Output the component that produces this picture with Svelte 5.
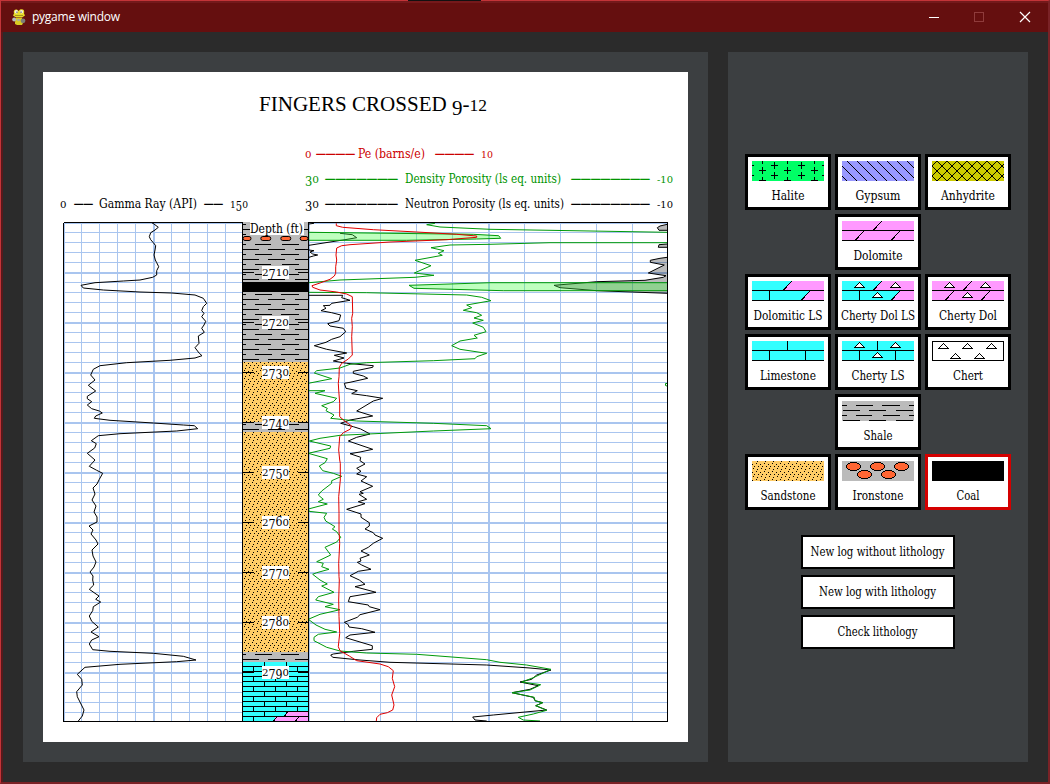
<script>
  // Curve samples are stored in thirds of a pixel, relative to each section's origin.
  function trace(sections) {
    return sections
      .map(([ox, oy, pts]) =>
        pts
          .split(' ')
          .map((p) => {
            const [x, y] = p.split(',').map(Number);
            return (ox + x / 3).toFixed(1) + ',' + (oy + y / 3).toFixed(1);
          })
          .join(' ')
      )
      .join(' ');
  }

  const gamma = trace([
    [50, 140, '305,248 312,252 325,262 315,270 302,278 298,290 302,299 310,308 317,317 315,330 312,345 316,360 320,368 326,380 320,392 320,405 308,412 270,420 220,423 135,428 93,436 100,444 160,450 270,456 365,459'],
    [60, 280, '405,45 430,55 440,70 430,80 425,92 432,100 425,110 437,124 432,135 425,145 433,157 415,168 417,190 405,203 418,220 426,227 405,234 330,241 200,248 120,257 100,268 92,285 105,300 85,316 107,333 82,349 82,356 95,365 82,375 95,386 118,393 127,399 107,408 103,415 150,421 280,429 370,435 403,437 413,446 350,453 180,461 115,467 94,482 109,491 104,504 82,520 105,540 88,559 110,571 128,580 118,598'],
    [0, 0, '291,1452 279,1464 285,1482 276,1500 288,1518 282,1536 291,1551 291,1566 267,1578 279,1590 273,1602 288,1620 294,1632 276,1650 279,1668 288,1686 282,1701 270,1716 279,1728'],
    [60, 580, '98,0 101,15 88,28 105,40 117,48 107,58 122,66 100,80 98,92 88,108 95,124 115,141 93,156 117,170 95,180 88,192 98,209 150,214 280,220 370,229 408,240 350,245 180,253 75,262 52,283 65,298 67,315 50,335 52,350 72,390 67,408 55,423']
  ]);

  const pe = trace([
    [290, 140, '139,250 139,257 158,262 250,269 380,276 500,283 560,288 560,292 470,299 300,306 180,314 155,317 140,324 138,345 140,360 137,380 137,400 133,408 120,418 90,429 66,437 68,442 90,450'],
    [300, 280, '110,36 140,42 157,50 158,100 155,115 157,140 155,170 157,225 145,237 125,250 118,262 117,290 115,310 116,330 119,370 119,410 135,424 155,438 150,448 130,458'],
    [300, 430, '119,20 116,60 119,90 121,100 121,150 116,200 117,250 117,300 119,340 116,400 117,440'],
    [300, 580, '118,0 116,60 117,110 119,160 115,200 120,212 148,228 170,242 240,252 265,260 280,272 277,295 284,320 275,345 282,375 278,390 262,398 240,403 230,413 229,423']
  ]);

  const neutron = [
    trace([[290, 140, '57,252 72,250']]),
    trace([[290, 140, '150,280 187,284 200,293 165,299 57,316']]),
    trace([[290, 140, '57,330 72,332 60,336 68,342 83,345 70,348 57,352']]),
    trace([
      [300, 280, '25,46 128,46 125,53 150,61 95,70 90,76 70,77 78,85 63,92 95,98 122,105 117,122 83,131 90,138 130,145 137,155 120,170 95,178 78,187 43,197 80,208 140,219 103,226 132,234 100,243 140,250 220,257 218,262 160,274 160,280 190,288 203,295 150,307 133,310 138,325 172,332 155,341 200,347 248,355 220,363 195,378 170,393 218,408 150,420 122,430 160,440 182,447'],
      [300, 430, '210,12 170,22 145,33 180,45 218,58 180,66 150,71 182,82 180,92 195,102 170,115 183,124 170,132 200,140 183,153 218,169 180,185 190,190 177,193 200,208 175,215 195,221 140,238 183,252 183,262 208,278 208,288 195,297 220,308 225,315 248,325 220,340 205,352 183,363 208,375 180,385 183,393 172,397 185,405 213,418 175,424 150,437'],
      [300, 580, '178,0 195,13 165,20 228,37 150,50 145,65 205,75 208,80 240,89 180,104 172,112 133,127 145,134 147,141 185,146 225,157 150,165 137,173 180,186 217,197 217,208 160,214 100,222 92,225 98,232 180,240 270,247 560,255 690,264 753,270 710,285 695,298 660,306 715,317 690,328 636,338 700,352 705,362 728,368 707,377 740,390 580,405 518,411 525,420 560,423']
    ])
  ];

  const density = [
    trace([[290, 140, '435,250 410,254 450,261 600,268 1132,277']]),
    trace([[290, 140, '57,277 550,283 626,287 632,295 560,297 350,301 57,301']]),
    trace([[290, 140, '1132,308 780,308 600,313 480,315 423,323 462,332 445,340 457,346 375,361 423,377 373,399 432,406 375,412 150,420 57,428']]),
    trace([[290, 140, '1132,428 600,428 357,436 372,445 640,452 1132,452']]),
    trace([
      [300, 280, '25,37 200,38 500,45 545,52 573,62 500,75 515,83 490,91 530,98 545,106 522,114 550,121 518,129 550,142 558,155 522,166 532,174 480,183 455,197 480,208 560,220 530,230 525,236 400,242 200,248 150,253 120,264 50,272 43,279 95,296 25,310']
    ]),
    trace([
      [300, 280, '25,332 75,332 45,340 110,355 100,365 65,377 82,385 78,392 102,405 92,415 170,423 400,430 560,437 573,446 400,453 120,466'],
      [300, 430, '60,25 28,33 92,48 90,55 25,70 82,86 75,98 58,108 68,122 100,130 125,139 95,152 95,160 65,183 55,195 70,208 55,215 82,222 25,237 27,244 80,250 72,262 77,273 105,290 97,297 110,305 122,322 110,336 75,352 92,375 50,395 70,400 65,410 87,418 50,428 38,433'],
      [300, 580, '60,0 82,12 65,18 102,37 55,50 47,60 100,73 75,80 120,89 60,103 25,118 48,135 75,148 110,156 55,163 42,172 42,182 80,202 120,213 200,219 350,223 560,239 600,247 680,255 753,268 700,293 665,306 722,314 690,330 636,338 703,352 705,362 728,368 707,377 740,391 700,402 655,412 670,420 720,423']
    ]),
    '667,383.5 665.5,383.5 665.5,385.5 667,386'
  ];

  const greenBands = [
    trace([[290, 140, '57,277 440,277 560,283 626,287 632,295 560,297 350,301 57,301']]),
    trace([[290, 140, '1132,428 600,428 357,436 372,445 640,452 1132,452']])
  ];
  const greyBands = [
    trace([[480, 140, '562,253 540,258 532,263 537,271 562,271']]),
    trace([[480, 140, '562,312 537,314 535,322 562,322']]),
    trace([[480, 140, '562,352 540,355 511,361 511,367 553,375 505,399 558,407 550,412 495,421 350,425 222,436 240,443 350,452 480,457 562,460']])
  ];

  const rows = Array.from({ length: 49 }, (_, i) => 232.5 + i * 10).filter((y, i) => i % 5 !== 4);
  const heavyRows = Array.from({ length: 9 }, (_, i) => 273 + i * 50);
  const gammaCols = [64.5, 81.5, 99.5, 117.5, 135.5, 171.5, 189.5, 207.5, 225.5];
  const poroCols = [309.5, 344.5, 380.5, 416.5, 452.5, 524.5, 560.5, 596.5, 632.5];
  const depths = [2710, 2720, 2730, 2740, 2750, 2760, 2770, 2780, 2790];

  // Old-style figures: 0-2 sit at x-height, 3 4 5 7 9 hang below the baseline.
  function figures(text) {
    if (/^[-012]+$/.test(text)) return [{ c: text, dy: 0, size: 10, small: true }];
    let drop = 0;
    return [...text].map((c) => {
      const low = '34579'.includes(c) ? 2.6 : 0;
      const small = '012'.includes(c);
      const out = { c, dy: low - drop, size: small ? 10 : 12, small };
      drop = low;
      return out;
    });
  }

  const scales = [
    { y: 158, fill: '#cc0000', parts: [['0', 305, 6.5], ['————', 316, 39], ['Pe (barns/e)', 358, 67], ['————', 435, 39], ['10', 481, 12]] },
    { y: 183, fill: '#009400', parts: [['30', 305, 14], ['———————', 325, 73], ['Density Porosity (ls eq. units)', 405, 156], ['————————', 571, 79], ['-10', 657, 16]] },
    { y: 208, fill: '#000', parts: [['30', 305, 14], ['———————', 325, 73], ['Neutron Porosity (ls eq. units)', 405, 159], ['————————', 571, 79], ['-10', 657, 16]] },
    { y: 208, fill: '#000', parts: [['0', 60, 6.5], ['——', 74, 19], ['Gamma Ray (API)', 99, 98], ['——', 204, 19], ['150', 230, 18]] }
  ];

  const rocks = [
    { name: 'Halite', w: 33, col: 1, row: 1 },
    { name: 'Gypsum', w: 45, col: 2, row: 1 },
    { name: 'Anhydrite', w: 54, col: 3, row: 1 },
    { name: 'Dolomite', w: 49, col: 2, row: 2 },
    { name: 'Dolomitic LS', w: 69, col: 1, row: 3 },
    { name: 'Cherty Dol LS', w: 74, col: 2, row: 3 },
    { name: 'Cherty Dol', w: 58, col: 3, row: 3 },
    { name: 'Limestone', w: 56, col: 1, row: 4 },
    { name: 'Cherty LS', w: 53, col: 2, row: 4 },
    { name: 'Chert', w: 30, col: 3, row: 4 },
    { name: 'Shale', w: 29, col: 2, row: 5 },
    { name: 'Sandstone', w: 55, col: 1, row: 6 },
    { name: 'Ironstone', w: 51, col: 2, row: 6 },
    { name: 'Coal', w: 23, col: 3, row: 6 }
  ];
  let selected = $state('Coal');

  const actions = [
    ['New log without lithology', 134],
    ['New log with lithology', 117],
    ['Check lithology', 80]
  ];

  const plus = (x, y) => `M${x - 3} ${y + 0.5}h7M${x + 0.5} ${y - 3}v7`;
  const halite = [[10, 9], [35, 9], [62, 9], [22, 4], [22, 14], [49, 4], [49, 14], [10, -1], [35, -1], [62, -1], [10, 19], [35, 19], [62, 19], [-2, 4], [-2, 14], [73, 4], [73, 14]]
    .map(([x, y]) => plus(x, y))
    .join('');
  const down = Array.from({ length: 10 }, (_, i) => `M${-15 + i * 10} 0l20 20`).join('');
  const up = Array.from({ length: 10 }, (_, i) => `M${-15 + i * 10} 20l20 -20`).join('');
  const tri = (x, y) => `M${x - 5} ${y + 5}L${x} ${y}L${x + 5} ${y + 5}Z`;
  const chertTri = tri(17.5, 1.5) + tri(53.5, 1.5) + tri(35.5, 11.5);
  const shaleA = 'M0 4.5h5M14 4.5h17M40 4.5h18M67 4.5h5M0 14.5h5M14 14.5h16M41 14.5h17M67 14.5h5';
  const shaleB = 'M1 9.5h17M27 9.5h17M54 9.5h17M1 19.5h17M27 19.5h17M54 19.5h17';
  const bricks = Array.from({ length: 12 }, (_, i) => {
    const y = 661.5 + i * 5;
    const xs = i % 2 ? [253.5, 275.5, 297.5] : [264.5, 286.5];
    return `M243 ${y + 5}h65` + xs.map((x) => `M${x} ${y}v5`).join('');
  }).join('');
</script>

{#snippet serif(text, x, y, w, fill)}
  <text {x} {y} {fill} textLength={w} lengthAdjust="spacingAndGlyphs" class="serif" class:rule={text[0] === '—'} stroke={text[0] === '—' ? fill : 'none'}>{text}</text>
{/snippet}

{#snippet numerals(text, x, y, w, fill)}
  <text {x} {y} {fill} textLength={w} lengthAdjust="spacingAndGlyphs" class="serif">{#each figures(text) as f}<tspan dy={f.dy} font-size={f.size} class:wide={f.small}>{f.c}</tspan>{/each}</text>
{/snippet}

<div class="window">
  <header>
    <svg class="snake" width="16" height="18" viewBox="0 0 16 18">
      <path d="M3 5.5C2 2 4 1 6 1.500L7.500 3 9 1.500C12 .5 14 2 13 5.500L14 7.500 11 9.500H5L2 7.500Z" fill="#e8dc2c" />
      <circle cx="5.300" cy="3.800" r="1.700" fill="#f1f1e4" /><circle cx="10.500" cy="3.800" r="1.700" fill="#f1f1e4" />
      <path d="M5.500 3.500h1v1.500h-1zM9.500 3.500h1v1.500h-1z" fill="#555" />
      <path d="M4 7.500h8" stroke="#a59b1c" />
      <path d="M5 10h6v3l1 2-1 2H6l-2-1v-2z" fill="#d9cb22" />
      <circle cx="3.200" cy="11.500" r="2" fill="#b4bcbb" /><circle cx="12" cy="12.800" r="2.400" fill="#7c7d76" />
      <circle cx="7.500" cy="12" r="1.300" fill="#a9aca0" />
    </svg>
    <span class="caption">pygame window</span>
    <svg class="controls" width="116" height="14" viewBox="0 0 116 14">
      <path d="M9 7.5h10" stroke="#fff" />
      <rect x="54.5" y="2.5" width="9" height="9" fill="none" stroke="#8f3b3b" />
      <path d="M100 2l10 10M110 2l-10 10" stroke="#fff" stroke-width="1.2" />
    </svg>
  </header>

  <main>
    <section class="log">
      <svg width="645" height="670" viewBox="43 72 645 670">
        <defs>
          <pattern id="sand" width="8" height="8" patternUnits="userSpaceOnUse" x="243" y="2">
            <rect width="8" height="8" fill="#ffcc66" />
            <path d="M1 0h1v1h-1zM5 1h1v1h-1zM7 3h1v1h-1zM3 3h1v1h-1zM2 6h1v1h-1zM6 5h1v1h-1z" fill="#000" />
          </pattern>
          <pattern id="shale" width="72" height="20" patternUnits="userSpaceOnUse" x="241" y="230">
            <rect width="72" height="20" fill="#bbb" />
            <path d={shaleA + shaleB} stroke="#000" />
          </pattern>
        </defs>
        <rect x="43" y="72" width="645" height="670" fill="#fff" />
        <text x="259" y="111" class="title" textLength="228" lengthAdjust="spacingAndGlyphs">FINGERS CROSSED <tspan dy="3.500">9</tspan><tspan dy="-3.500">-</tspan><tspan font-size="17">12</tspan></text>

        {#each scales as s}
          {#each s.parts as [t, x, w]}
            {#if /^-?\d/.test(t)}
              {@render numerals(t, x, s.y, w, s.fill)}
            {:else}
              {@render serif(t, x, s.y, w, s.fill)}
            {/if}
          {/each}
        {/each}

        <g stroke="#a9c5ef" shape-rendering="crispEdges">
          {#each [223.5, ...rows] as y}<path d="M64 {y}H242M309 {y}H667" />{/each}
          {#each [...gammaCols, ...poroCols] as x}<path d="M{x} 223V721" />{/each}
          {#each heavyRows as y}<path d="M64 {y}H242M309 {y}H667" stroke-width="2" />{/each}
          <path d="M154 223V721M489 223V721" stroke-width="2" />
        </g>

        <polyline points={gamma} fill="none" stroke="#000" />
        {#each greyBands as b}<polygon points={b} fill="#000" fill-opacity=".27" /><polyline points={b} fill="none" stroke="#000" />{/each}
        {#each neutron as n}<polyline points={n} fill="none" stroke="#000" />{/each}
        {#each greenBands as b}<polygon points={b} fill="#44ff44" fill-opacity=".34" />{/each}
        {#each density as d}<polyline points={d} fill="none" stroke="#009a0a" />{/each}
        <polyline points={pe} fill="none" stroke="#e00000" />

        <g shape-rendering="crispEdges">
          <rect x="243" y="222" width="65" height="500" fill="#bbb" />
          <rect x="243" y="222" width="65" height="140" fill="url(#shale)" />
          <rect x="243" y="282" width="65" height="10" fill="#000" />
          <rect x="243" y="362" width="65" height="60" fill="url(#sand)" />
          <rect x="243" y="422" width="65" height="10" fill="url(#shale)" />
          <rect x="243" y="432" width="65" height="220" fill="url(#sand)" />
          <rect x="243" y="652" width="65" height="10" fill="url(#shale)" />
          <rect x="243" y="662" width="65" height="60" fill="#33ffff" />
          <path d={bricks} stroke="#000" />
          <path d="M275 717h33v4h-34zM288 712h20v4h-23z" fill="#ff99ff" />
          <path d="M284 716.5l4-4.5M273 721.5l4-4.5M295 721.5l4-4.5M275 716.5h33" stroke="#000" fill="none" />
        </g>
        <rect x="243" y="237" width="65" height="5" fill="#bbb" />
        {#each [246, 265.8, 285.8, 305.2] as x}
          <rect x={Math.max(243, x - 5)} y="236.5" width={x === 305.2 ? 7.8 : x === 246 ? 8 : 10} height="4" rx="2" fill="#ff6633" stroke="#000" />
        {/each}
        <path d="M63.5 222.5H243M308 222.5H667.5V721.5H63.5V222.5M242.5 222V722M308.5 222V722" fill="none" stroke="#000" shape-rendering="crispEdges" />
        <rect x="250" y="222" width="54" height="13" fill="#fff" />
        {@render serif('Depth (ft)', 250, 233, 53, '#000')}
        {#each depths as d, i}
          <path d="M243 {272.5 + i * 50}h11M298 {272.5 + i * 50}h10" stroke="#000" />
          <rect x="262" y={266 + i * 50} width="27" height="13" fill="#fff" />
          {@render numerals(String(d), 262, 276 + i * 50, 27, '#000')}
        {/each}
      </svg>
    </section>

    <aside>
      <div class="legend">
        {#each rocks as r}
          <button class="rock c{r.col} r{r.row}" class:selected={selected === r.name} onclick={() => (selected = r.name)}>
            <svg width="72" height="42" viewBox="0 0 72 42">
              <svg width="72" height="20" viewBox="0 0 72 20" shape-rendering="crispEdges">
                {#if r.name === 'Halite'}
                  <rect width="72" height="20" fill="#00ff66" /><path d={halite} stroke="#000" />
                {:else if r.name === 'Gypsum'}
                  <rect width="72" height="20" fill="#9999ff" /><path d={down} stroke="#000" />
                {:else if r.name === 'Anhydrite'}
                  <rect width="72" height="20" fill="#cccc00" /><path d={down + up} stroke="#000" />
                {:else if r.name === 'Chert'}
                  <rect x=".5" y=".5" width="71" height="19" fill="#fff" stroke="#000" />
                  <path d={tri(11.5, 2.5) + tri(35.5, 2.5) + tri(59.5, 2.5) + tri(23.5, 12.5) + tri(47.5, 12.5)} fill="#fff" stroke="#000" />
                {:else if r.name === 'Shale'}
                  <rect width="72" height="20" fill="#bbb" /><path d={shaleA + shaleB} stroke="#000" />
                {:else if r.name === 'Sandstone'}
                  <rect width="72" height="20" fill="url(#sand)" />
                {:else if r.name === 'Ironstone'}
                  <rect width="72" height="20" fill="#bbb" />
                  {#each [[11.5, 5.5], [35.5, 5.5], [59.5, 5.5], [22.5, 13.5], [46.5, 13.5]] as [cx, cy]}
                    <ellipse {cx} {cy} rx="7" ry="4" fill="#ff6633" stroke="#000" />
                  {/each}
                {:else if r.name === 'Coal'}
                  <rect width="72" height="20" fill="#000" />
                {:else if r.name.endsWith('LS') || r.name === 'Limestone'}
                  <rect width="72" height="20" fill="#33ffff" />
                  {#if r.name.includes('Dol')}
                    <path d="M40 0h32v20H49l9-10H31z" fill="#ff99ff" />
                    <path d="M31 9.5l9-9.5M49 19.5l9-9.5M17.5 10v9" stroke="#000" />
                  {:else}
                    <path d="M35.5 0v9M17.5 10v9M53.5 10v9" stroke="#000" />
                  {/if}
                  <path d="M0 9.5h72M0 19.5h72" stroke="#000" />
                {:else}
                  <rect width="72" height="20" fill="#ff99ff" />
                  <path d="M0 9.5h72M0 19.5h72M31 9.5l9-9.5M13 19.5l9-9.5M49 19.5l9-9.5" stroke="#000" />
                {/if}
                {#if r.name.startsWith('Cherty')}
                  <path d={chertTri} fill="#fff" stroke="#000" />
                {/if}
              </svg>
              <text x={36 - r.w / 2} y="39" textLength={r.w} lengthAdjust="spacingAndGlyphs" class="serif">{r.name}</text>
            </svg>
          </button>
        {/each}
      </div>
      <div class="actions">
        {#each actions as [label, w]}
          <button>
            <svg width="150" height="30" viewBox="0 0 150 30">
              <text x={74.5 - w / 2} y="19" textLength={w} lengthAdjust="spacingAndGlyphs" class="serif">{label}</text>
            </svg>
          </button>
        {/each}
      </div>
    </aside>
  </main>
  <i class="notch"></i>
</div>

<style>
  :global(body) { margin: 0; overflow: hidden; }
  .window {
    position: relative;
    box-sizing: border-box;
    width: 1050px;
    height: 784px;
    background: #2b2b2b;
    border: 2px solid #7a2226;
    border-top: 1px solid #c33438;
    border-left: 1px solid #c33438;
    display: flex;
    flex-direction: column;
  }
  .notch { position: absolute; left: 407px; top: -1px; width: 73px; height: 1px; background: #111; }
  header {
    height: 31px;
    box-sizing: border-box;
    background: #650f0f;
    border-top: 2px solid #74191b;
    display: flex;
    align-items: center;
    padding: 0 10px 2px;
    flex: none;
  }
  .snake { margin-top: 1px; }
  .caption {
    margin-left: 5px;
    color: #fff;
    font: 12px/16px "Open Sans", "Noto Sans", sans-serif;
    letter-spacing: -0.25px;
  }
  .controls { margin-left: auto; margin-right: 2px; }
  main {
    flex: 1;
    display: flex;
    gap: 20px;
    padding: 20px;
    border-left: 2px solid #58191c;
  }
  .log {
    width: 645px;
    height: 670px;
    padding: 20px;
    background: #3c3f41;
  }
  svg { display: block; }
  aside {
    width: 300px;
    box-sizing: border-box;
    background: #3c3f41;
    padding: 102px 17px 0;
  }
  .legend {
    display: grid;
    grid-template-columns: repeat(3, 86px);
    grid-template-rows: repeat(6, 56px);
    gap: 4px;
  }
  button { margin: 0; border: 0 solid #000; background: #fff; }
  .rock { border-width: 3px; padding: 4px; }
  .rock.selected { border-color: #d40000; }
  .c1 { grid-column: 1; }
  .c2 { grid-column: 2; }
  .c3 { grid-column: 3; }
  .r1 { grid-row: 1; }
  .r2 { grid-row: 2; }
  .r3 { grid-row: 3; }
  .r4 { grid-row: 4; }
  .r5 { grid-row: 5; }
  .r6 { grid-row: 6; }
  .rock svg, .actions svg { overflow: visible; }
  .rock svg svg { overflow: hidden; }
  .actions {
    display: flex;
    flex-direction: column;
    gap: 6px;
    width: 154px;
    margin: 25px 0 0 56px;
  }
  .actions button { height: 34px; padding: 0; border-width: 2px; }
  .serif {
    font-family: "DejaVu Serif Condensed", "DejaVu Serif", serif;
    font-stretch: condensed;
    font-size: 12.5px;
    white-space: pre;
  }
  .rule { stroke-width: 0.4px; }
  .wide { font-family: "DejaVu Serif", serif; font-stretch: normal; }
  .title { font-family: "Liberation Serif", serif; font-size: 20.5px; }
</style>
